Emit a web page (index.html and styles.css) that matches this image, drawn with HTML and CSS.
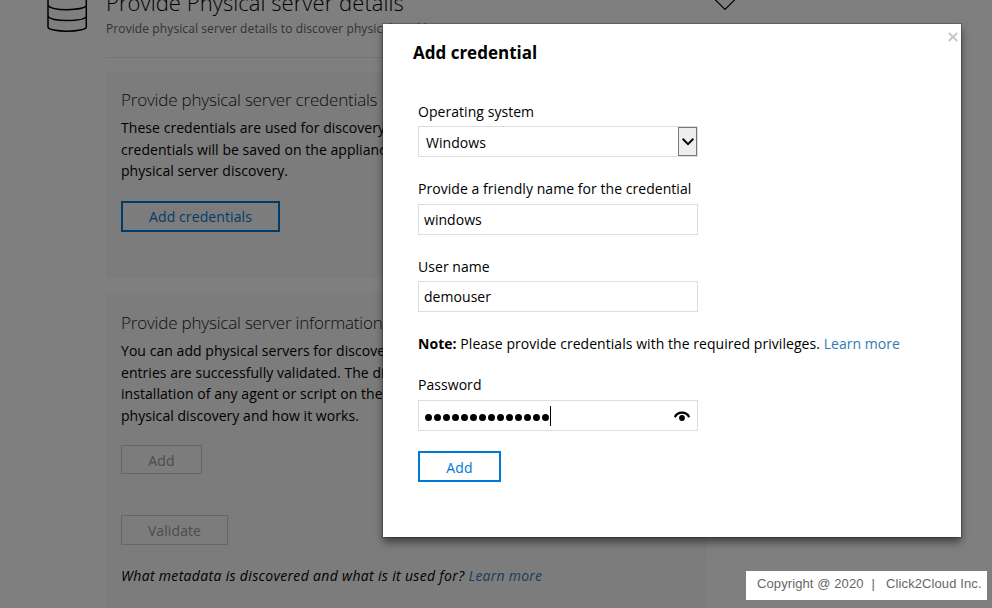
FILE: index.html
```html
<!DOCTYPE html>
<html lang="en">
<head>
<meta charset="utf-8">
<title>Add credential</title>
<link rel="stylesheet" href="styles.css">
</head>
<body>
<main class="page">
  <header class="section-head">
    <svg class="db-icon" width="42" height="34" viewBox="0 0 42 34" fill="none" stroke="#000" stroke-width="1.5">
      <path d="M1 -2V27C1 29.500 10 31.200 20 31.200S39.300 29.500 39.300 27V-2M1 5.500C3 8 10.500 9.700 20 9.700S38 8 39.300 5.500M1 16.500C3 19 10.500 20.500 20 20.500S38 19 39.300 16.500"/>
    </svg>
    <div class="head-text">
      <h1><span>Provide Physical server details</span></h1>
      <p class="subtitle">Provide physical server details to discover physical workl</p>
    </div>
    <svg class="chevron" width="24" height="12" viewBox="0 0 24 12" fill="none" stroke="#000" stroke-width="1.2"><path d="M0 -2.500L12 9.500L24 -2.500"/></svg>
  </header>
  <section class="card card-credentials">
    <h2>Provide physical server credentials</h2>
    <p class="body">These credentials are used for discovery<br>credentials will be saved on the appliance<br>physical server discovery.</p>
    <button class="btn btn-wide">Add credentials</button>
  </section>
  <section class="card card-info">
    <h2>Provide physical server information</h2>
    <p class="body">You can add physical servers for discovery<br>entries are successfully validated. The dis<br>installation of any agent or script on the<br>physical discovery and how it works.</p>
    <button class="btn-off btn-off-add" disabled>Add</button>
    <button class="btn-off btn-off-validate" disabled>Validate</button>
    <p class="meta"><em>What metadata is discovered and what is it used for?</em> <a>Learn more</a></p>
  </section>
</main>
<div class="overlay"></div>
<div class="modal" role="dialog">
  <svg class="close" width="10" height="10" viewBox="0 0 10 10" stroke="#c8c8c8" stroke-width="2"><path d="M.8 1L9.200 9M9.200 1L.8 9"/></svg>
  <h3>Add credential</h3>
  <div class="form">
    <label class="l-os">Operating system</label>
    <div class="field select"><span>Windows</span>
      <i class="drop"><svg width="12" height="8" viewBox="0 0 12 8" fill="none" stroke="#000" stroke-width="2"><path d="M.6 .8L6 6.200L11.400 .8"/></svg></i>
    </div>
    <label class="l-name">Provide a friendly name for the credential</label>
    <div class="field">windows</div>
    <label class="l-user">User name</label>
    <div class="field">demouser</div>
    <p class="note"><b>Note:</b> <span>Please provide credentials with the required privileges.</span> <a>Learn more</a></p>
    <label class="l-pass">Password</label>
    <div class="field password">
      <span class="dots"><i></i><i></i><i></i><i></i><i></i><i></i><i></i><i></i><i></i><i></i><i></i><i></i><i></i><i></i></span><span class="caret"></span>
      <svg class="eye" width="16" height="10" viewBox="0 0 16 10"><path d="M.8 6.200C3.500 .2 12.500 .2 15.200 6.200" fill="none" stroke="#000" stroke-width="2.300"/><circle cx="8" cy="7" r="2.900"/></svg>
    </div>
    <button class="btn btn-add">Add</button>
  </div>
</div>
<footer class="copyright"><span>Copyright @ 2020</span><span class="bar">|</span><span>Click2Cloud Inc.</span></footer>
</body>
</html>
```

FILE: styles.css
```css
* { box-sizing: border-box; }
body {
  margin: 0;
  width: 992px;
  height: 608px;
  overflow: hidden;
  position: relative;
  background: #fff;
  color: #000;
  font: 14px/21.5px "Open Sans", "Noto Sans", sans-serif;
  letter-spacing: .05px;
  white-space: nowrap;
}
h1, h2, h3, p { margin: 0; font-weight: 400; }
.page { height: 608px; overflow: hidden; }
.section-head { display: flex; height: 71px; }
.db-icon { margin-left: 47px; flex: none; }
.head-text { margin-left: 17px; width: 600px; height: 58px; border-bottom: 1px solid #e8e8e8; }
h1 { font-size: 22px; font-weight: 300; line-height: 30px; margin-top: -13px; letter-spacing: .06px; }
.subtitle { font-size: 12px; line-height: 18px; color: #666; margin-top: 3px; letter-spacing: .1px; }
.chevron { margin-left: 7px; }
.card { margin-left: 106px; width: 601px; padding: 0 15px; background: #f8f8f8; }
.card-credentials { height: 207px; padding-top: 17px; margin-bottom: 15px; }
.card-info { height: 320px; padding-top: 18px; }
h2 { font-size: 17px; font-weight: 300; line-height: 24px; margin-bottom: 5px; color: #222; letter-spacing: -.19px; }
.btn, .btn-off { display: block; font: inherit; letter-spacing: .1px; padding: 2px 0 0; }
.btn { border: 2px solid #0078d4; color: #0078d4; background: transparent; height: 31px; }
.btn-wide { width: 159px; margin-top: 19px; }
.btn-off { border: 1px solid #ccc; background: transparent; color: #999; }
.btn-off-add { width: 81px; height: 29px; margin-top: 19px; }
.btn-off-validate { width: 107px; height: 30px; margin-top: 41px; }
.meta { margin-top: 20px; font-style: italic; letter-spacing: .33px; }
.meta a { letter-spacing: .25px; }
a { color: #337ab7; }
.overlay { position: absolute; inset: 0; background: rgba(0, 0, 0, .5); }
.modal {
  position: absolute; left: 383px; top: 24px; width: 578px; height: 513px;
  background: #fff; padding: 17px 0 0 35px;
  box-shadow: 0 0 0 1px rgba(0, 0, 0, .2), 0 5px 8px rgba(0, 0, 0, .5);
}
.close { position: absolute; right: 3px; top: 8px; }
h3 { font-size: 17px; line-height: 24px; font-weight: 700; margin-left: -5px; letter-spacing: 0; }
.form label { display: block; height: 22px; }
.form .l-os { margin-top: 36px; height: 25px; }
.form .l-name { margin-top: 21px; height: 26px; }
.form .l-user { margin-top: 21px; height: 25px; }
.form .l-pass { margin-top: 19.5px; height: 26px; }
.field { width: 280px; height: 31px; border: 1px solid #ddd; padding-left: 5px; line-height: 30px; }
.select { display: flex; justify-content: space-between; padding-left: 7px; line-height: 31px; }
.drop { width: 19px; background: #eee; border: 1px solid #777; display: flex; align-items: center; justify-content: center; }
.note { margin-top: 21px; }
.password { display: flex; align-items: center; }
.dots { display: flex; gap: 2px; margin-top: 4px; margin-left: 1px; }
.dots i { width: 7px; height: 7px; border-radius: 50%; background: #000; }
.caret { width: 1px; height: 20px; background: #000; margin-left: 1px; }
.eye { margin-left: auto; margin-right: 7px; }
.btn-add { width: 83px; margin-top: 20px; }
.copyright {
  position: absolute; left: 746px; top: 571px; width: 241px; height: 29px;
  background: #fff; color: #666; padding-left: 11px; display: flex;
  font: 13px/26px "Liberation Sans", Arial, sans-serif;
  letter-spacing: .1px;
}
.bar { margin: 0 11px 0 8px; }
```
